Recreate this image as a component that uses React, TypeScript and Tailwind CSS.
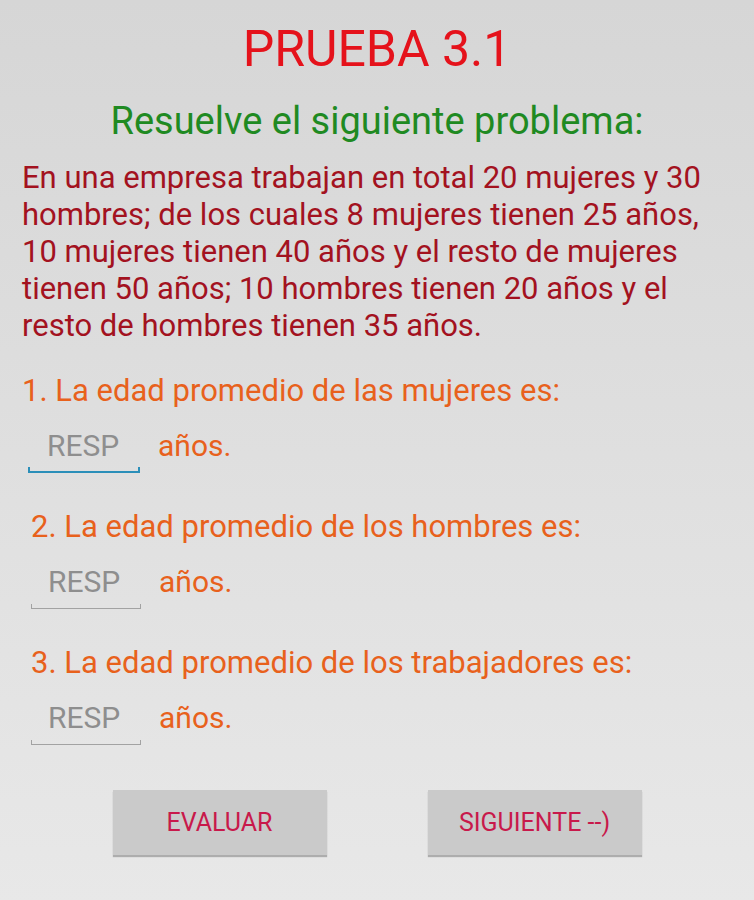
const questions = [
  { n: 1, text: "La edad promedio de las mujeres es:", focused: true },
  { n: 2, text: "La edad promedio de los hombres es:", focused: false },
  { n: 3, text: "La edad promedio de los trabajadores es:", focused: false },
];

function RespField({ focused }: { focused: boolean }) {
  return (
    <div className="relative w-[112px] h-[56px] flex items-center pl-[19px]">
      <span className="text-[#8e8e8e] text-[30px] leading-none -mt-[2px]">RESP</span>
      {focused ? (
        <div className="absolute left-0 right-0 bottom-[2px] h-[6px] border-x-2 border-b-2 border-[#2b8fb9]" />
      ) : (
        <div className="absolute left-[2px] right-0 bottom-[2px] h-[5px] border-x border-b border-[#a2a2a2]" />
      )}
    </div>
  );
}

export default function App() {
  return (
    <div
      className="w-[754px] h-[900px] bg-gradient-to-b from-[#d6d6d6] to-[#e8e8e8] overflow-hidden"
      style={{ fontFamily: "Roboto, 'Noto Sans', sans-serif" }}
    >
      <h1 className="pt-[24px] text-center text-[50px] leading-none text-[#e5121b]">
        PRUEBA 3.1
      </h1>
      <h2 className="mt-[28px] text-center text-[38px] leading-none text-[#1f8a22]">
        Resuelve el siguiente problema:
      </h2>
      <p className="mt-[19px] px-[22px] text-[31px] leading-[37px] text-[#a3121f]">
        En una empresa trabajan en total 20 mujeres y 30 hombres; de los cuales 8
        mujeres tienen 25 años, 10 mujeres tienen 40 años y el resto de mujeres
        tienen 50 años; 10 hombres tienen 20 años y el resto de hombres tienen 35
        años.
      </p>

      <div className="mt-[28px] flex flex-col gap-[33px]">
        {questions.map((q) => (
          <div key={q.n} className={q.n === 1 ? "pl-[22px]" : "pl-[31px]"}>
            <div className="text-[31px] leading-[37px] text-[#e8611c]">
              {q.n}. {q.text}
            </div>
            <div
              className={`mt-[10px] flex items-center gap-[18px] ${
                q.n === 1 ? "ml-[6px]" : "-ml-[2px]"
              }`}
            >
              <RespField focused={q.focused} />
              <span className="text-[30px] leading-none text-[#e8611c] -mt-[3px]">
                años.
              </span>
            </div>
          </div>
        ))}
      </div>

      <div className="mt-[43px] flex justify-center gap-[101px]">
        <button className="w-[214px] h-[65px] bg-[#cacaca] shadow-[0_2px_1px_rgba(0,0,0,0.25)] text-[25px] text-[#c8194b]">
          EVALUAR
        </button>
        <button className="w-[214px] h-[65px] bg-[#cacaca] shadow-[0_2px_1px_rgba(0,0,0,0.25)] text-[25px] text-[#c8194b]">
          SIGUIENTE --)
        </button>
      </div>
    </div>
  );
}
